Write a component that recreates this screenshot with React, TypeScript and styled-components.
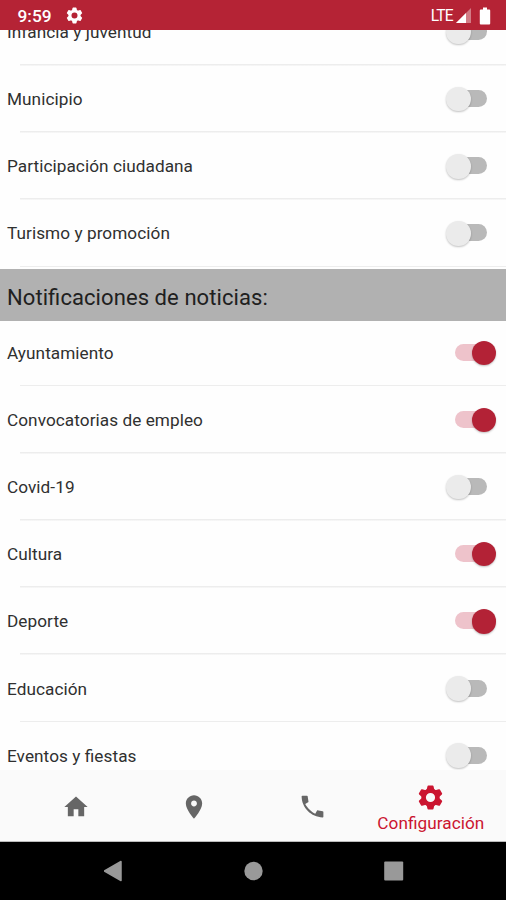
import React from "react";
import styled, { createGlobalStyle } from "styled-components";

const GlobalStyle = createGlobalStyle`
  * { box-sizing: border-box; }
  body { margin: 0; background: #fff; font-family: Roboto, "Liberation Sans", sans-serif; }
`;

const Screen = styled.div`
  display: flex;
  flex-direction: column;
  width: 506px;
  height: 900px;
  overflow: hidden;
  background: #fefefe;
`;

const StatusBar = styled.header`
  display: flex;
  align-items: center;
  flex: 0 0 29.5px;
  padding: 2px 15px 0 17.5px;
  background: #b52335;
  color: #fff;
`;

const Clock = styled.span`
  font-size: 17.3px;
  font-weight: 500;
  line-height: 20px;
  margin-right: 12px;
  width: 35px;
`;

const Network = styled.span`
  margin-left: auto;
  margin-right: 3px;
  font-size: 15.6px;
  letter-spacing: -0.7px;
  line-height: 20px;
`;

const Icon = styled.svg<{ $gap?: number }>`
  display: block;
  flex: none;
  margin-right: ${({ $gap = 0 }) => $gap}px;
`;

const Viewport = styled.main`
  flex: 0 0 740.5px;
  overflow: hidden;
`;

const List = styled.div`
  margin-top: -31px;
`;

const Row = styled.label`
  display: flex;
  align-items: center;
  justify-content: space-between;
  height: 67.15px;
  padding: 0 10px 0 7px;
  background: linear-gradient(#ededed, #ededed) 20px 100% / 100% 1.5px no-repeat;
`;

const RowText = styled.span`
  font-size: 17.2px;
  line-height: 22px;
  letter-spacing: 0.06px;
  font-feature-settings: "liga" 1;
  color: #303030;
`;

const SectionTitle = styled.h2`
  display: flex;
  align-items: center;
  height: 51.8px;
  margin: 2.4px 0 -2px;
  padding: 4px 7px 0;
  background: #b1b1b1;
  color: #202020;
  font-size: 22px;
  font-weight: 400;
  letter-spacing: 0.08px;
  font-feature-settings: "liga" 1;
`;

const Switch = styled.span<{ $on: boolean }>`
  display: flex;
  align-items: center;
  flex-direction: ${({ $on }) => ($on ? "row-reverse" : "row")};
  width: ${({ $on }) => ($on ? 41 : 50)}px;
  height: 26px;
`;

const Thumb = styled.span<{ $on: boolean }>`
  flex: none;
  width: 24.5px;
  height: 24.5px;
  border-radius: 50%;
  background: ${({ $on }) => ($on ? "#b32236" : "#ebebeb")};
  box-shadow: 0 1px 2px rgba(0, 0, 0, 0.24);
  z-index: 1;
`;

const Track = styled.span<{ $on: boolean }>`
  width: 30px;
  height: 17px;
  margin: ${({ $on }) => ($on ? "0 -13px 1px 0" : "0 0 1px -13.5px")};
  border-radius: 9px;
  background: ${({ $on }) => ($on ? "#eec3cb" : "#b9b9b9")};
`;

const TabBar = styled.nav`
  display: flex;
  flex: 0 0 71.5px;
  padding: 0 16px 0 17px;
  background: #fafafa;
  border-bottom: 1px solid #bbb;
`;

const Tab = styled.button<{ $active?: boolean }>`
  display: flex;
  flex: 1;
  flex-direction: column;
  align-items: center;
  justify-content: center;
  padding: ${({ $active }) => ($active ? "6px 0 0" : "3px 0 0")};
  border: 0;
  background: none;
  color: ${({ $active }) => ($active ? "#cb1530" : "#666")};
  font-family: inherit;
`;

const TabLabel = styled.span`
  font-size: 17.2px;
  line-height: 21px;
  margin-top: 1px;
  letter-spacing: 0.05px;
  font-feature-settings: "liga" 1;
`;

const SystemBar = styled.footer`
  display: flex;
  flex: 1;
  align-items: center;
  justify-content: center;
  gap: 120px;
  padding-left: 1px;
  background: #000;
`;

const HOME = "M10 20v-6h4v6h5v-8h3L12 3 2 12h3v8z";
const PIN =
  "M12 2C8.13 2 5 5.13 5 9c0 5.25 7 13 7 13s7-7.75 7-13c0-3.87-3.13-7-7-7zm0 9.5c-1.38 0-2.5-1.12-2.5-2.5s1.12-2.5 2.5-2.5 2.5 1.12 2.5 2.5-1.12 2.5-2.5 2.5z";
const PHONE =
  "M3 3.6Q3 3 3.6 3H7.4Q8 3 8 3.6L8.7 8.3 6 9.9C7.6 13 11 16.4 14.3 18L15.9 15.2 20.4 15.9Q21 16 21 16.6V20.4Q21 21 20.4 21C11 21 3 13 3 3.6z";

function Glyph({ d, size }: { d: string; size: number }) {
  return (
    <Icon width={size} height={size} viewBox="0 0 24 24" fill="currentColor">
      <path d={d} />
    </Icon>
  );
}

function Gear({ size }: { size: number }) {
  return (
    <Icon width={size} height={size} viewBox="0 0 24 24" fill="currentColor">
      <circle cx="12" cy="12" r="5.7" fill="none" stroke="currentColor" strokeWidth="3.8" />
      {[0, 60, 120, 180, 240, 300].map((angle) => (
        <path
          key={angle}
          transform={`rotate(${angle} 12 12)`}
          d="M8.6 6.5 9.5 2.6Q9.6 2 10.2 2H13.8Q14.4 2 14.5 2.6L15.4 6.5z"
        />
      ))}
    </Icon>
  );
}

type Option = [name: string, enabled: boolean];

const EVENTS: Option[] = [
  ["Infancia y juventud", false],
  ["Municipio", false],
  ["Participación ciudadana", false],
  ["Turismo y promoción", false],
];

const NEWS: Option[] = [
  ["Ayuntamiento", true],
  ["Convocatorias de empleo", true],
  ["Covid-19", false],
  ["Cultura", true],
  ["Deporte", true],
  ["Educación", false],
  ["Eventos y fiestas", false],
];

function Options({ items }: { items: Option[] }) {
  return (
    <>
      {items.map(([name, on]) => (
        <Row key={name}>
          <RowText>{name}</RowText>
          <Switch $on={on} role="switch" aria-checked={on}>
            <Thumb $on={on} />
            <Track $on={on} />
          </Switch>
        </Row>
      ))}
    </>
  );
}

export default function App() {
  return (
    <>
      <GlobalStyle />
      <Screen>
        <StatusBar>
          <Clock>9:59</Clock>
          <Gear size={19} />
          <Network>LTE</Network>
          <Icon $gap={8} width="15" height="15" viewBox="0 0 15 15">
            <path d="M15 0V15H0z" fill="#fff" opacity="0.4" />
            <path d="M10 5V15H0z" fill="#fff" />
          </Icon>
          <Icon width="12" height="18" viewBox="0 0 12 18">
            <path
              d="M4 0.5h4v2h2.2q1 0 1 1v13q0 1-1 1H1.8q-1 0-1-1v-13q0-1 1-1H4z"
              fill="#fff"
            />
          </Icon>
        </StatusBar>
        <Viewport>
          <List>
            <Options items={EVENTS} />
            <SectionTitle>Notificaciones de noticias:</SectionTitle>
            <Options items={NEWS} />
          </List>
        </Viewport>
        <TabBar>
          <Tab aria-label="Inicio">
            <Glyph d={HOME} size={28} />
          </Tab>
          <Tab aria-label="Mapa">
            <Glyph d={PIN} size={28} />
          </Tab>
          <Tab aria-label="Teléfono">
            <Glyph d={PHONE} size={29} />
          </Tab>
          <Tab $active>
            <Gear size={29} />
            <TabLabel>Configuración</TabLabel>
          </Tab>
        </TabBar>
        <SystemBar>
          <Icon width="20" height="22" viewBox="0 0 20 22">
            <path d="M0.5 11 17 1.5v19z" fill="#999" stroke="#999" strokeWidth="1.5" strokeLinejoin="round" />
          </Icon>
          <Icon width="20" height="20" viewBox="0 0 20 20">
            <circle cx="9.5" cy="10" r="9.2" fill="#999" />
          </Icon>
          <Icon width="20" height="20" viewBox="0 0 20 20">
            <rect x="0.2" y="0.5" width="19" height="19" rx="1" fill="#999" />
          </Icon>
        </SystemBar>
      </Screen>
    </>
  );
}
